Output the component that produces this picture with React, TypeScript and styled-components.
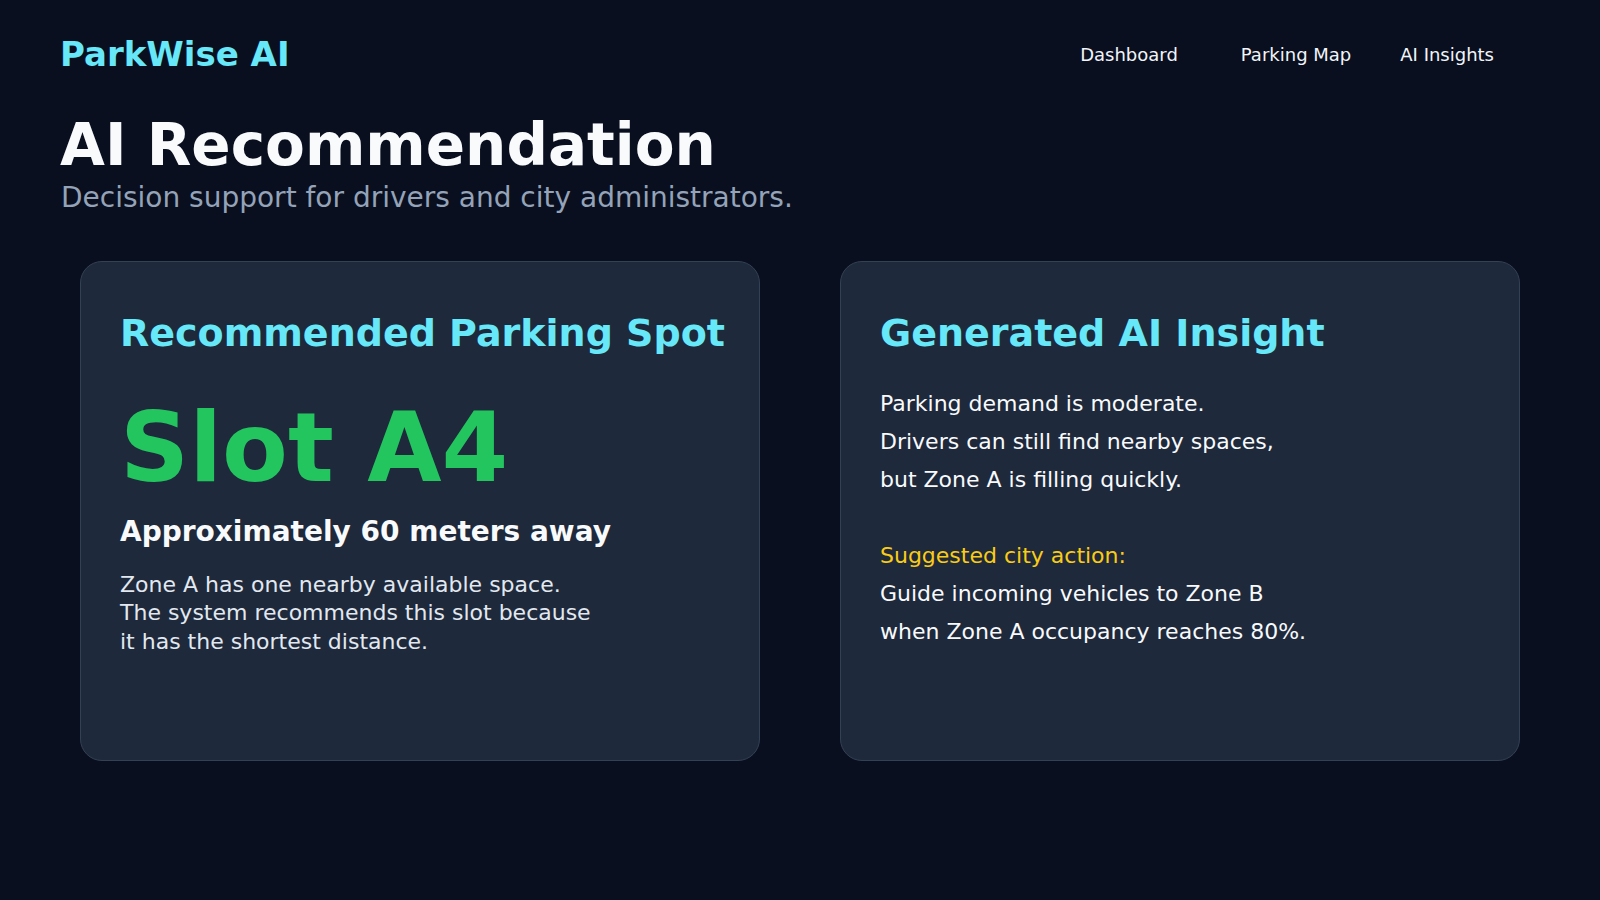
import styled, { createGlobalStyle } from "styled-components";

const GlobalStyle = createGlobalStyle`
  html, body {
    margin: 0;
    padding: 0;
    background: #090f1f;
  }
  body {
    font-family: "DejaVu Sans", "Liberation Sans", sans-serif;
    color: #f8fafc;
  }
`;

const Page = styled.div`
  min-height: 900px;
  box-sizing: border-box;
  padding: 34px 60px 0;
  background: #090f1f;
`;

const Header = styled.header`
  display: flex;
  align-items: center;
  justify-content: space-between;
`;

const Logo = styled.div`
  font-size: 34px;
  font-weight: 700;
  color: #67e8f9;
`;

const Nav = styled.nav`
  display: flex;
  align-items: center;
  gap: 49px;
  margin-right: 46px;
`;

const NavLink = styled.a<{ $active?: boolean }>`
  font-size: 18px;
  color: #f1f5f9;
  text-decoration: none;
  cursor: pointer;
  margin-right: ${(p) => (p.$active ? "14px" : "0")};
`;

const Title = styled.h1`
  margin: 38px 0 0;
  font-size: 58px;
  font-weight: 700;
  line-height: 1.164;
  color: #f8fafc;
`;

const Subtitle = styled.p`
  margin: 1px 0 0 1px;
  font-size: 28px;
  color: #94a3b8;
`;

const Cards = styled.section`
  display: grid;
  grid-template-columns: repeat(2, minmax(0, 1fr));
  gap: 80px;
  padding: 0 20px;
  margin-top: 47px;
`;

const Card = styled.div`
  min-height: 500px;
  box-sizing: border-box;
  padding: 49px 39px;
  background: #1e293b;
  border: 1px solid #334155;
  border-radius: 22px;
`;

const CardTitle = styled.h2`
  margin: 0;
  font-size: 38px;
  font-weight: 700;
  white-space: nowrap;
  color: #67e8f9;
`;

const SlotName = styled.div`
  margin-top: 45px;
  font-size: 96px;
  font-weight: 700;
  line-height: 1;
  color: #22c55e;
`;

const Distance = styled.div`
  margin-top: 19px;
  font-size: 28px;
  font-weight: 700;
  color: #f8fafc;
`;

const Reason = styled.p`
  margin: 23px 0 0;
  font-size: 22px;
  line-height: 1.3;
  color: #e2e8f0;
`;

const Insight = styled.p`
  margin: 30px 0 0;
  font-size: 22px;
  line-height: 38px;
  color: #f8fafc;
`;

const Action = styled.span`
  color: #facc15;
`;

export default function App() {
  return (
    <>
      <GlobalStyle />
      <Page>
        <Header>
          <Logo>ParkWise AI</Logo>
          <Nav>
            <NavLink $active>Dashboard</NavLink>
            <NavLink>Parking Map</NavLink>
            <NavLink>AI Insights</NavLink>
          </Nav>
        </Header>

        <Title>AI Recommendation</Title>
        <Subtitle>Decision support for drivers and city administrators.</Subtitle>

        <Cards>
          <Card>
            <CardTitle>Recommended Parking Spot</CardTitle>
            <SlotName>Slot A4</SlotName>
            <Distance>Approximately 60 meters away</Distance>
            <Reason>
              Zone A has one nearby available space.
              <br />
              The system recommends this slot because
              <br />
              it has the shortest distance.
            </Reason>
          </Card>

          <Card>
            <CardTitle>Generated AI Insight</CardTitle>
            <Insight>
              Parking demand is moderate.
              <br />
              Drivers can still find nearby spaces,
              <br />
              but Zone A is filling quickly.
              <br />
              <br />
              <Action>Suggested city action:</Action>
              <br />
              Guide incoming vehicles to Zone B
              <br />
              when Zone A occupancy reaches 80%.
            </Insight>
          </Card>
        </Cards>
      </Page>
    </>
  );
}
